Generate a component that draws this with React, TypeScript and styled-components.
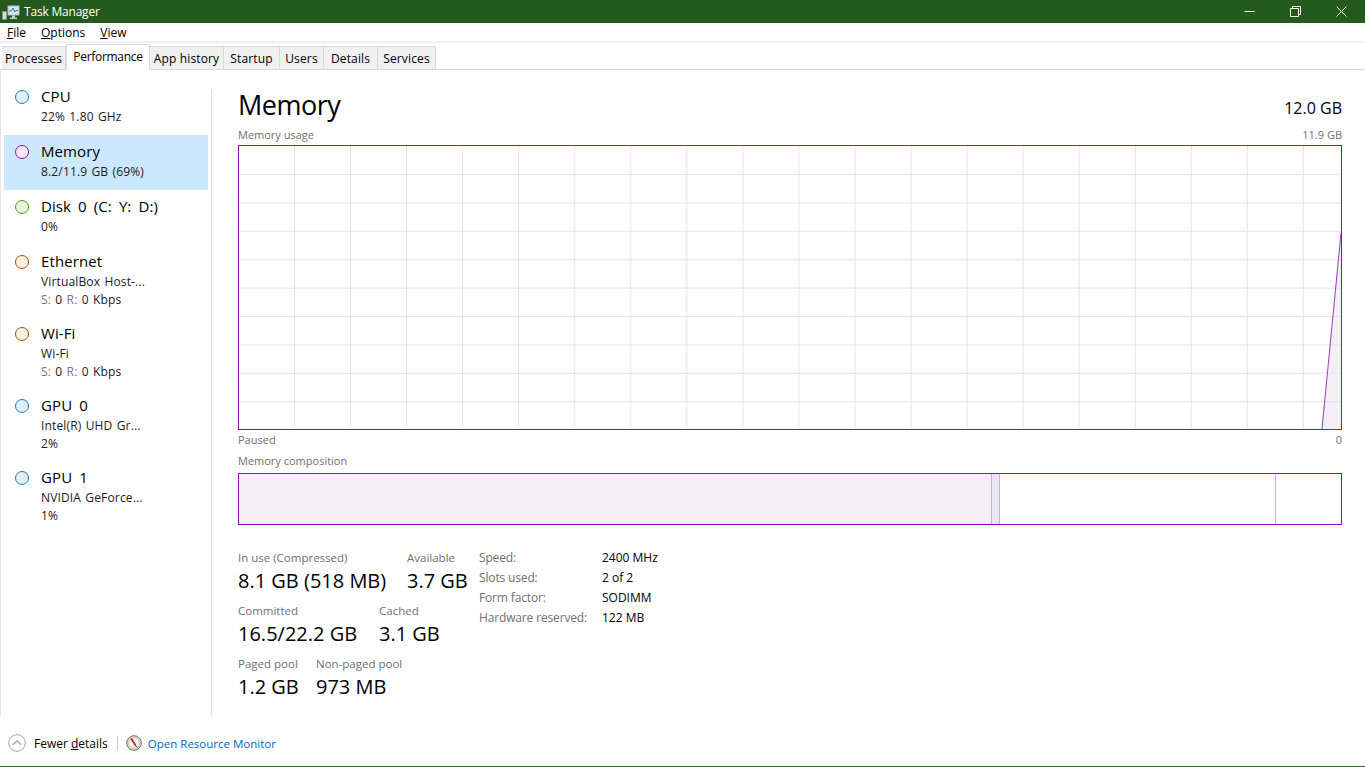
import styled, { createGlobalStyle } from "styled-components";

const FONT = `"Comic Sans MS", "Open Sans", "Noto Sans", sans-serif`;

const TABS = [
	{ label: "Processes", width: 64 },
	{ label: "Performance", width: 84, active: true },
	{ label: "App history", width: 74 },
	{ label: "Startup", width: 56 },
	{ label: "Users", width: 44 },
	{ label: "Details", width: 54 },
	{ label: "Services", width: 58 },
];

const DEVICES = [
	{ name: "CPU", lines: ["22% 1.80 GHz"], color: "#1a7fbd", fill: "#e3eef8" },
	{ name: "Memory", lines: ["8.2/11.9 GB (69%)"], color: "#8b12ae", fill: "#f6eafa", selected: true },
	{ name: "Disk 0 (C: Y: D:)", lines: ["0%"], color: "#4da60c", fill: "#e6f4dc" },
	{ name: "Ethernet", lines: ["VirtualBox Host-..."], rate: true, color: "#a74f01", fill: "#fcf0e6" },
	{ name: "Wi-Fi", lines: ["Wi-Fi"], rate: true, color: "#a74f01", fill: "#fcf0e6" },
	{ name: "GPU 0", lines: ["Intel(R) UHD Gr...", "2%"], color: "#1a7fbd", fill: "#e3eef8" },
	{ name: "GPU 1", lines: ["NVIDIA GeForce...", "1%"], color: "#1a7fbd", fill: "#e3eef8" },
];

const STATS = [
	[
		{ label: "In use (Compressed)", value: "8.1 GB (518 MB)", width: 169 },
		{ label: "Available", value: "3.7 GB" },
	],
	[
		{ label: "Committed", value: "16.5/22.2 GB", width: 141 },
		{ label: "Cached", value: "3.1 GB" },
	],
	[
		{ label: "Paged pool", value: "1.2 GB", width: 78 },
		{ label: "Non-paged pool", value: "973 MB" },
	],
];

const SPECS = [
	["Speed:", "2400 MHz"],
	["Slots used:", "2 of 2"],
	["Form factor:", "SODIMM"],
	["Hardware reserved:", "122 MB"],
];

const GRID_X = Array.from({ length: 19 }, (_, i) => 55.5 + i * 56.05);
const GRID_Y = Array.from({ length: 9 }, (_, i) => 28.5 + i * 28.4);

export default function App() {
	return (
		<Window>
			<GlobalStyle />
			<TitleBar>
				<AppIcon viewBox="0 0 18 18">
					<rect x="0.5" y="8.5" width="4" height="8" fill="#dcdcdc" stroke="#8a8a8a" strokeWidth="0.8" />
					<rect x="6" y="3" width="11" height="9" fill="#d5e8f8" stroke="#b4bac0" />
					<path d="M7 8 L9 8 L11 5 L13 9 L14 7.5 L16 7.5" fill="none" stroke="#2f77b5" strokeWidth="1" />
					<path d="M10 12.5 H13 V14.5 H15 V16 H8 V14.5 H10 Z" fill="#c4c8cc" />
				</AppIcon>
				<WindowTitle>Task Manager</WindowTitle>
				<WindowControls>
					<ControlButton>
						<svg width="11" height="11" viewBox="0 0 11 11">
							<path d="M0.5 5.5 H10.5" stroke="#fff" fill="none" />
						</svg>
					</ControlButton>
					<ControlButton>
						<svg width="11" height="11" viewBox="0 0 11 11">
							<path d="M0.5 2.5 H8.5 V10.5 H0.5 Z M2.5 2.5 V0.5 H10.5 V8.5 H8.5" stroke="#fff" fill="none" />
						</svg>
					</ControlButton>
					<ControlButton>
						<svg width="11" height="11" viewBox="0 0 11 11">
							<path d="M0.5 0.5 L10.5 10.5 M10.5 0.5 L0.5 10.5" stroke="#fff" fill="none" />
						</svg>
					</ControlButton>
				</WindowControls>
			</TitleBar>

			<MenuBar>
				<MenuItem><u>F</u>ile</MenuItem>
				<MenuItem><u>O</u>ptions</MenuItem>
				<MenuItem><u>V</u>iew</MenuItem>
			</MenuBar>

			<TabStrip>
				{TABS.map((tab) => (
					<Tab key={tab.label} $width={tab.width} $active={tab.active}>
						{tab.label}
					</Tab>
				))}
			</TabStrip>

			<Body>
				<Sidebar>
					{DEVICES.map((device) => (
						<Device key={device.name} $selected={device.selected} $tall={device.lines.length + (device.rate ? 1 : 0) > 1}>
							<Dot $color={device.color} $fill={device.fill} />
							<div>
								<DeviceName>{device.name}</DeviceName>
								{device.lines.map((line) => (
									<DeviceLine key={line}>{line}</DeviceLine>
								))}
								{device.rate && (
									<DeviceLine>
										<Muted>S:</Muted> 0 <Muted>R:</Muted> 0 Kbps
									</DeviceLine>
								)}
							</div>
						</Device>
					))}
				</Sidebar>
				<Divider />
				<Content>
					<Heading>
						<Title>Memory</Title>
						<Capacity>12.0 GB</Capacity>
					</Heading>
					<UsageCaption>
						<span>Memory usage</span>
						<span>11.9 GB</span>
					</UsageCaption>
					<Chart>
						<svg width="1102" height="283" viewBox="0 0 1102 283">
							<polygon points="1083,283 1102,87 1102,283" fill="#f2f0f4" />
							{GRID_X.map((x) => (
								<line key={x} x1={x} x2={x} y1="0" y2="283" stroke="#eedcf4" />
							))}
							{GRID_Y.map((y) => (
								<line key={y} x1="0" x2="1102" y1={y} y2={y} stroke="#eedcf4" />
							))}
							<line x1="1083" y1="283" x2="1102" y2="87" stroke="#9a3dbb" />
						</svg>
					</Chart>
					<Caption>
						<span>Paused</span>
						<span>0</span>
					</Caption>
					<CompositionCaption>Memory composition</CompositionCaption>
					<Composition>
						<InUse />
						<Modified />
						<Standby />
					</Composition>

					<Details>
						<Stats>
							{STATS.map((row) => (
								<StatRow key={row[0].label}>
									{row.map((stat) => (
										<Stat key={stat.label} $width={stat.width}>
											<StatLabel>{stat.label}</StatLabel>
											<StatValue>{stat.value}</StatValue>
										</Stat>
									))}
								</StatRow>
							))}
						</Stats>
						<Specs>
							{SPECS.map(([label, value]) => (
								<SpecRow key={label}>
									<SpecLabel>{label}</SpecLabel>
									<SpecValue>{value}</SpecValue>
								</SpecRow>
							))}
						</Specs>
					</Details>
				</Content>
			</Body>

			<Footer>
				<ChevronCircle viewBox="0 0 18 18">
					<circle cx="9" cy="9" r="8.3" fill="#fff" stroke="#a8a8a8" />
					<path d="M5 10.8 L9 6.8 L13 10.8" fill="none" stroke="#a0a0a0" strokeWidth="1.3" />
				</ChevronCircle>
				<FewerDetails>
					Fewer <u>d</u>etails
				</FewerDetails>
				<FooterSeparator />
				<GaugeIcon viewBox="0 0 16 16">
					<circle cx="8" cy="8" r="7.3" fill="#dedcd6" stroke="#6f6c64" />
					<circle cx="8" cy="8" r="5.2" fill="#fbfaf6" stroke="#b5b2a8" strokeWidth="0.6" />
					<path d="M4.2 3.8 L6 3 L10.6 10.4 L9.2 11.4 Z" fill="#d0201c" />
					<path d="M9.6 10.8 L11.4 12.6" stroke="#555" strokeWidth="1" />
				</GaugeIcon>
				<ResourceLink>Open Resource Monitor</ResourceLink>
			</Footer>
		</Window>
	);
}

const GlobalStyle = createGlobalStyle`
	html, body {
		margin: 0;
		padding: 0;
		background: #fff;
	}
	body {
		font-family: ${FONT};
		overflow: hidden;
	}
`;

const Window = styled.div`
	width: 1365px;
	height: 767px;
	display: flex;
	flex-direction: column;
	background: #fff;
	color: #000;
	border-bottom: 1px solid #2b6a22;
	box-sizing: border-box;
`;

const TitleBar = styled.div`
	height: 23px;
	flex: none;
	display: flex;
	align-items: center;
	background: #255a1e;
	color: #fff;
	padding-left: 2px;
`;

const AppIcon = styled.svg`
	width: 18px;
	height: 18px;
	flex: none;
`;

const WindowTitle = styled.span`
	margin-left: 4px;
	font-size: 12px;
	letter-spacing: -0.2px;
`;

const WindowControls = styled.div`
	display: flex;
	margin-left: auto;
	margin-right: 1px;
`;

const ControlButton = styled.div`
	width: 46px;
	height: 21px;
	display: flex;
	align-items: center;
	justify-content: center;
`;

const MenuBar = styled.div`
	height: 18px;
	flex: none;
	display: flex;
	align-items: center;
	gap: 15px;
	padding-left: 7px;
	font-size: 12px;
	border-bottom: 2px solid #f0f0f0;
`;

const MenuItem = styled.span``;

const TabStrip = styled.div`
	height: 26px;
	flex: none;
	display: flex;
	align-items: flex-end;
	padding-left: 2px;
	border-bottom: 1px solid #d9d9d9;
`;

const Tab = styled.div<{ $width: number; $active?: boolean }>`
	width: ${(p) => p.$width}px;
	height: ${(p) => (p.$active ? 26 : 23)}px;
	box-sizing: border-box;
	display: flex;
	align-items: center;
	justify-content: center;
	font-size: 12px;
	letter-spacing: ${(p) => (p.$active ? -0.3 : 0.15)}px;
	white-space: nowrap;
	background: ${(p) => (p.$active ? "#fff" : "#f0f0f0")};
	border: 1px solid #d9d9d9;
	border-bottom: none;
	border-left: ${(p) => (p.$active ? "1px solid #d9d9d9" : "none")};
	padding-top: ${(p) => (p.$active ? 0 : 1)}px;
	padding-bottom: ${(p) => (p.$active ? 2 : 0)}px;
	margin-bottom: ${(p) => (p.$active ? -1 : 0)}px;
`;

const Body = styled.div`
	flex: 1;
	min-height: 0;
	display: flex;
	border-left: 1px solid #e4e4e4;
`;

const Sidebar = styled.div`
	width: 210px;
	flex: none;
	box-sizing: border-box;
	padding: 10px 3px 0 3px;
`;

const Device = styled.div<{ $selected?: boolean; $tall?: boolean }>`
	height: ${(p) => (p.$tall ? 72 : 55)}px;
	box-sizing: border-box;
	display: flex;
	padding: 8px 0 0 11px;
	gap: 12px;
	background: ${(p) => (p.$selected ? "#cce8ff" : "transparent")};
`;

const Dot = styled.span<{ $color: string; $fill: string }>`
	width: 14px;
	height: 14px;
	flex: none;
	margin-top: 2px;
	box-sizing: border-box;
	border-radius: 50%;
	border: 1px solid ${(p) => p.$color};
	background: ${(p) => p.$fill};
`;

const DeviceName = styled.div`
	font-size: 15px;
	line-height: 19px;
	height: 19px;
	margin-top: -1px;
	margin-bottom: 2px;
	letter-spacing: 0.1px;
	word-spacing: 3px;
	white-space: nowrap;
`;

const DeviceLine = styled.div`
	font-size: 12px;
	line-height: 18px;
	letter-spacing: 0.15px;
	word-spacing: 1px;
	color: #1a1a1a;
	white-space: nowrap;
`;

const Muted = styled.span`
	color: #777;
`;

const Divider = styled.div`
	width: 1px;
	flex: none;
	margin-top: 19px;
	background: #d9d9d9;
`;

const Content = styled.div`
	flex: 1;
	min-width: 0;
	display: flex;
	flex-direction: column;
	padding: 0 23px 0 26px;
`;

const Heading = styled.div`
	height: 57px;
	flex: none;
	display: flex;
	justify-content: space-between;
	align-items: center;
	padding-top: 13px;
	box-sizing: border-box;
`;

const Title = styled.div`
	font-size: 27px;
	line-height: 36px;
	letter-spacing: -0.5px;
`;

const Capacity = styled.div`
	font-size: 16px;
	margin-top: 6px;
`;

const Caption = styled.div`
	height: 18px;
	flex: none;
	display: flex;
	align-items: center;
	justify-content: space-between;
	font-size: 11px;
	color: #707070;
`;

const UsageCaption = styled(Caption)`
	padding-bottom: 4px;
	box-sizing: border-box;
`;

const Chart = styled.div`
	height: 285px;
	flex: none;
	box-sizing: border-box;
	border: 1px solid #8b12ae;
	line-height: 0;
	background: #fff;
`;

const CompositionCaption = styled(Caption)`
	margin-top: 3px;
	margin-bottom: 4px;
`;

const Composition = styled.div`
	height: 52px;
	flex: none;
	box-sizing: border-box;
	border: 1px solid #8b12ae;
	display: flex;
`;

const InUse = styled.div`
	width: 752px;
	flex: none;
	background: #f2f0f4;
`;

const Modified = styled.div`
	width: 9px;
	flex: none;
	box-sizing: border-box;
	background: #ece6f2;
	border-left: 1px solid #c9b2d8;
	border-right: 1px solid #c9b2d8;
`;

const Standby = styled.div`
	width: 276px;
	flex: none;
	box-sizing: border-box;
	border-right: 1px solid #c9b2d8;
`;

const Details = styled.div`
	display: flex;
	margin-top: 24px;
`;

const Stats = styled.div`
	width: 241px;
	flex: none;
	display: flex;
	flex-direction: column;
	gap: 7px;
`;

const StatRow = styled.div`
	display: flex;
`;

const Stat = styled.div<{ $width?: number }>`
	${(p) => p.$width && `width: ${p.$width}px;`}
	flex: none;
	white-space: nowrap;
`;

const StatLabel = styled.div`
	font-size: 11.5px;
	line-height: 17px;
	margin-bottom: 1px;
	color: #707070;
`;

const StatValue = styled.div`
	font-size: 20px;
	line-height: 28px;
`;

const Specs = styled.div`
	display: flex;
	flex-direction: column;
	margin-top: -2px;
`;

const SpecRow = styled.div`
	height: 20px;
	display: flex;
	align-items: center;
	font-size: 12px;
`;

const SpecLabel = styled.span`
	width: 123px;
	letter-spacing: -0.15px;
	color: #707070;
`;

const SpecValue = styled.span``;

const Footer = styled.div`
	height: 50px;
	flex: none;
	display: flex;
	align-items: center;
	padding: 4px 0 0 8px;
	box-sizing: border-box;
`;

const ChevronCircle = styled.svg`
	width: 18px;
	height: 18px;
	flex: none;
`;

const FewerDetails = styled.span`
	margin-left: 8px;
	font-size: 12px;
`;

const FooterSeparator = styled.span`
	width: 1px;
	height: 15px;
	margin-left: 9px;
	background: #c8c8c8;
`;

const GaugeIcon = styled.svg`
	width: 16px;
	height: 16px;
	flex: none;
	margin-left: 8px;
`;

const ResourceLink = styled.a`
	margin-left: 6px;
	font-size: 11.5px;
	color: #0066cc;
`;
